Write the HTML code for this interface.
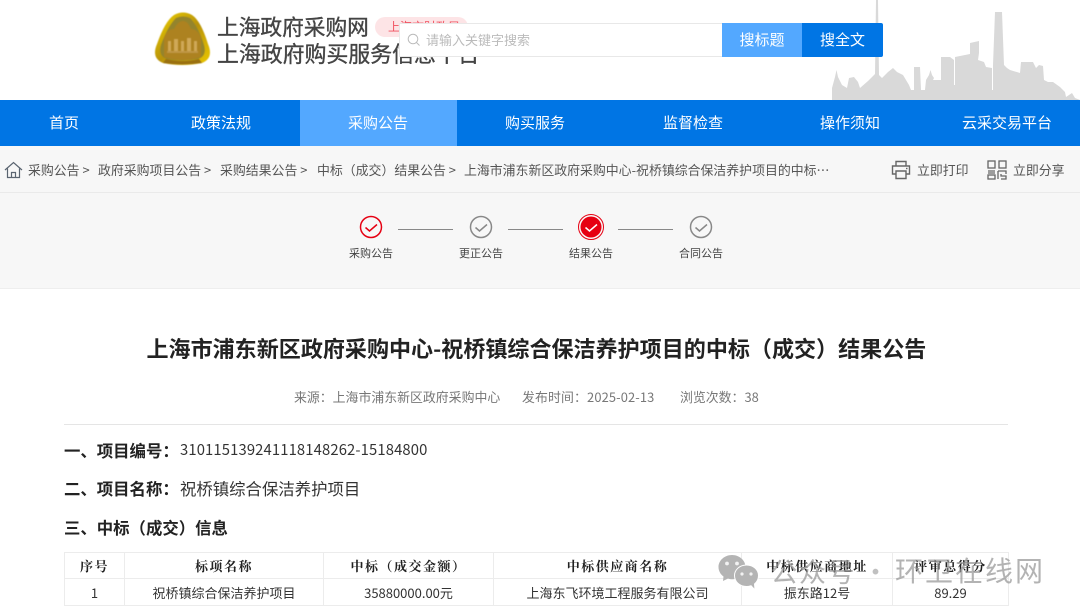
<!DOCTYPE html>
<html lang="zh-CN"><head><meta charset="utf-8"><title>上海政府采购网</title>
<style>
*{margin:0;padding:0;box-sizing:border-box}
html,body{width:1080px;height:615px;overflow:hidden;background:#fff}
body{position:relative;font-family:"Noto Sans CJK SC","Liberation Sans",sans-serif;color:#333}
.a{position:absolute;white-space:nowrap;line-height:1}
svg{position:absolute;display:block}
.nav{position:absolute;top:100px;height:46px;line-height:46px;text-align:center;color:#fff;font-size:15px}
.bc{font-size:12.9px;color:#555;top:164px}
.lb{font-size:11px;color:#444;width:60px;text-align:center}
.h{font-size:16.4px;font-weight:bold;color:#222;left:64px}
.v{font-size:16.4px;color:#333;left:180px}
table{position:absolute;left:64px;top:552px;width:944px;height:53px;border-collapse:collapse;table-layout:fixed}
td{border:1px solid #ececec;text-align:center;font-size:13px;color:#333;line-height:1;padding:0}
tr.t td{font-family:"Noto Serif CJK SC","Liberation Serif",serif;font-weight:bold;letter-spacing:1.5px;color:#222}
</style></head><body>

<svg style="left:154px;top:12px;filter:blur(.4px)" width="57" height="54" viewBox="0 0 57 54">
<defs><linearGradient id="g" x1="0" y1="0" x2="1" y2="1"><stop offset="0" stop-color="#f0d400"/><stop offset=".5" stop-color="#b8920a"/><stop offset="1" stop-color="#ecc800"/></linearGradient></defs>
<path d="M20 3Q29-2 38 3Q47 9 54 32Q60 46 48 51Q28 55 9 51Q-3 46 3 32Q11 9 20 3Z" fill="url(#g)"/>
<path d="M22 6Q29 3 36 6Q44 14 50 33Q53 44 44 47Q28 50 13 47Q4 44 7 33Q14 14 22 6Z" fill="#94842c"/>
<path d="M10 26Q13 17 20 17Q24 9 29 9Q34 9 37 17Q44 17 47 26L47 45Q29 51 10 45Z" fill="#ad8220"/>
<path d="M14 39V29h3v10zM20 39V27h4v12zM27 39V29h3v10zM33 39V26h4v13zM40 39V29h3v10z" fill="#cfa857"/>
<path d="M13 39H44V41H13Z" fill="#bf9646"/>
<path d="M12 47Q28 51 45 47L48 51Q28 54 9 51Z" fill="#9a7010"/>
</svg>

<div class="a" style="left:217px;top:15.500px;font-size:21.700px;color:#444;-webkit-text-stroke:.35px #444">上海政府采购网</div>
<div class="a" style="left:217px;top:42.500px;font-size:21.900px;color:#444;-webkit-text-stroke:.35px #444">上海政府购买服务信息平台</div>
<div class="a" style="left:375px;top:17px;width:93px;height:20px;border-radius:10px;background:#fde4e6;color:#f0505f;font-size:12px;line-height:20px;padding-left:13px">上海市财政局</div>

<svg style="left:832px;top:0" width="248" height="100" viewBox="832 0 248 100">
<path fill="#d9d9d9" d="M832 100V88L835 77L836.500 70L838 77L842 85L847 88L849 78L854 77L858 82L860 88L868 81L875 74L876 0H878L879 75L882 78L888 72L893 68L897 72L903 75L909 85L911 90H914V67H920L921 90H925L926 80L929 75L930.500 70L932 75L934 78L933 80H941V57H950L954 60V85H955V57L970 54V43L979 41V53L978 60L984 62L986 67L992 68L992 90L993 90L993 65L995 12H1002L1004 65L1007 68L1010 70L1020 73L1021 62H1033L1036 68L1039 65L1043 66L1044 80L1048 82L1053 82L1060 87L1065 92L1066 97L1072 93L1075 98L1080 100Z"/>
</svg>

<div class="a" style="left:399px;top:22.700px;width:324px;height:34.800px;background:#fff;border:1px solid #e8e8e8"></div>
<svg style="left:407px;top:33px" width="14" height="14" viewBox="0 0 14 14" fill="none" stroke="#bbb" stroke-width="1"><circle cx="6" cy="6" r="4.800"/><path d="M9.500 9.500L12.500 12.500"/></svg>
<div class="a" style="left:426px;top:33px;font-size:13px;color:#bbb">请输入关键字搜索</div>
<div class="a" style="left:722px;top:22.700px;width:80px;height:34.800px;background:#53a8ff;color:#fff;font-size:15px;line-height:34.800px;text-align:center">搜标题</div>
<div class="a" style="left:802px;top:22.700px;width:81px;height:34.800px;background:#0075e4;color:#fff;font-size:15px;line-height:34.800px;text-align:center;border-radius:0 2px 2px 0">搜全文</div>

<div class="a" style="left:0;top:100px;width:1080px;height:46px;background:#0075e4"></div>
<div class="a" style="left:300px;top:100px;width:157px;height:46px;background:#53a8ff"></div>
<div class="nav" style="left:14px;width:100px">首页</div>
<div class="nav" style="left:171px;width:100px">政策法规</div>
<div class="nav" style="left:328px;width:100px">采购公告</div>
<div class="nav" style="left:485px;width:100px">购买服务</div>
<div class="nav" style="left:643px;width:100px">监督检查</div>
<div class="nav" style="left:800px;width:100px">操作须知</div>
<div class="nav" style="left:947px;width:120px">云采交易平台</div>

<div class="a" style="left:0;top:146px;width:1080px;height:143px;background:#f7f7f7;border-bottom:1px solid #eee"></div>
<div class="a" style="left:0;top:192px;width:1080px;height:1px;background:#eaeaea"></div>

<svg style="left:4px;top:161px" width="19" height="18" viewBox="0 0 19 18" fill="none" stroke="#5a6470" stroke-width="1.200"><path d="M1 9L9.500 1.500L18 9M3.500 7.500V16.500H15.500V7.500M7.500 16.500V11.500H11.500V16.500"/></svg>
<div class="a bc" style="left:28px">采购公告 &gt;</div>
<div class="a bc" style="left:98px">政府采购项目公告 &gt;</div>
<div class="a bc" style="left:220px">采购结果公告 &gt;</div>
<div class="a bc" style="left:317px">中标（成交）结果公告 &gt;</div>
<div class="a bc" style="left:464px">上海市浦东新区政府采购中心-祝桥镇综合保洁养护项目的中标…</div>

<svg style="left:891px;top:160px" width="20" height="20" viewBox="0 0 20 20" fill="none" stroke="#666" stroke-width="1.400"><path d="M5 6V1.500H15V6M5 14H1.500V6H18.500V14H15M5 11H15V18.500H5Z"/><path d="M15 8.500h1.500" /></svg>
<div class="a bc" style="left:917px">立即打印</div>
<svg style="left:987px;top:160px" width="20" height="20" viewBox="0 0 20 20" fill="none" stroke="#666" stroke-width="1.300"><rect x="1" y="1" width="7" height="7"/><rect x="12" y="1" width="7" height="7"/><path d="M1 11H8M1 13H8" /><rect x="1" y="15" width="7" height="4"/><path d="M11 11H19V14M11 11V19M14 14V16H19V19H14"/></svg>
<div class="a bc" style="left:1013px">立即分享</div>

<svg style="left:340px;top:205px" width="400" height="44" viewBox="340 205 400 44" fill="none">
<circle cx="371" cy="227" r="10.500" stroke="#e60012" stroke-width="1.500"/><path d="M365.500 227.500L369.500 231L377 224.500" stroke="#e60012" stroke-width="1.500"/>
<circle cx="481" cy="227" r="10.500" stroke="#888" stroke-width="1.500"/><path d="M475.500 227.500L479.500 231L487 224.500" stroke="#888" stroke-width="1.500"/>
<circle cx="591" cy="227" r="12.500" stroke="#e60012" stroke-width="1"/><circle cx="591" cy="227" r="10.500" fill="#e60012"/><path d="M585.500 227.500L589.500 231L597 224.500" stroke="#fff" stroke-width="1.500"/>
<circle cx="701" cy="227" r="10.500" stroke="#888" stroke-width="1.500"/><path d="M695.500 227.500L699.500 231L707 224.500" stroke="#888" stroke-width="1.500"/>
<path d="M398 229.500H453M508 229.500H563M618 229.500H673" stroke="#888" stroke-width="1"/>
</svg>
<div class="a lb" style="left:341px;top:248px">采购公告</div>
<div class="a lb" style="left:451px;top:248px">更正公告</div>
<div class="a lb" style="left:561px;top:248px">结果公告</div>
<div class="a lb" style="left:671px;top:248px">合同公告</div>

<div class="a" style="left:146.500px;top:337px;font-size:22.050px;font-weight:bold;color:#222">上海市浦东新区政府采购中心-祝桥镇综合保洁养护项目的中标（成交）结果公告</div>
<div class="a" style="left:294px;top:391px;font-size:12.900px;color:#777">来源：上海市浦东新区政府采购中心</div>
<div class="a" style="left:522px;top:391px;font-size:12.900px;color:#777;letter-spacing:.12px">发布时间：2025-02-13</div>
<div class="a" style="left:680px;top:391px;font-size:12.900px;color:#777">浏览次数：38</div>
<div class="a" style="left:64px;top:424px;width:944px;height:1px;background:#e5e5e5"></div>

<div class="a h" style="top:442px">一、项目编号：</div>
<div class="a" style="left:180px;top:443px;font-size:14.800px;color:#333;letter-spacing:.14px">310115139241118148262-15184800</div>
<div class="a h" style="top:480px">二、项目名称：</div>
<div class="a v" style="top:480px">祝桥镇综合保洁养护项目</div>
<div class="a h" style="top:519px">三、中标（成交）信息</div>

<table>
<colgroup><col style="width:60px"><col style="width:199px"><col style="width:170px"><col style="width:248px"><col style="width:151px"><col style="width:116px"></colgroup>
<tr class="t" style="height:26px"><td>序号</td><td>标项名称</td><td>中标（成交金额）</td><td>中标供应商名称</td><td>中标供应商地址</td><td>评审总得分</td></tr>
<tr style="height:27px"><td>1</td><td>祝桥镇综合保洁养护项目</td><td>35880000.00元</td><td>上海东飞环境工程服务有限公司</td><td>振东路12号</td><td>89.29</td></tr>
</table>

<svg style="left:718px;top:554px" width="42" height="38" viewBox="0 0 42 38">
<path d="M14 1C6.500 1 .5 6.500 .5 13C.5 17 2.500 20.300 5.500 22.500L5 27L10 24.500C11.500 25 13 25.300 14 25.300C21.500 25.300 27.500 19.500 27.500 13C27.500 6.500 21.500 1 14 1Z" fill="#b4b4b4"/>
<path d="M28.500 11C21.500 11 16.500 16 16.500 21.500C16.500 27.500 21.500 32.500 28.500 32.500C30 32.500 31.500 32.200 33 31.700L37 36L36.500 30C38.800 28 40.500 25 40.500 21.500C40.500 16 35.500 11 28.500 11Z" fill="#b4b4b4" stroke="#fff" stroke-width="1"/>
<circle cx="9" cy="9.500" r="1.900" fill="#f2f2f2"/><circle cx="19" cy="9.500" r="1.900" fill="#f2f2f2"/>
<circle cx="24" cy="20" r="1.600" fill="#f2f2f2"/><circle cx="33" cy="20" r="1.600" fill="#f2f2f2"/>
</svg>
<div class="a" style="left:770.500px;top:557px;font-size:27px;color:rgba(150,150,150,.72);letter-spacing:1.500px">公众号</div>
<div class="a" style="left:862px;top:557px;font-size:27px;color:rgba(150,150,150,.6)">·</div>
<div class="a" style="left:895px;top:556px;font-size:28px;color:rgba(150,150,150,.72);letter-spacing:2px">环卫在线网</div>

</body></html>
